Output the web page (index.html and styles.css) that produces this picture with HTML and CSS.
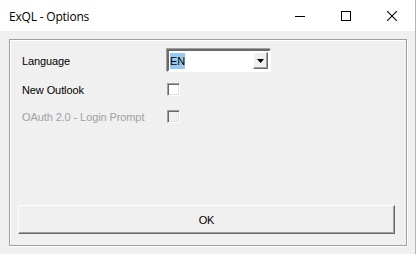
FILE: index.html
```html
<!DOCTYPE html>
<html>
<head>
<meta charset="utf-8">
<link rel="stylesheet" href="styles.css">
</head>
<body>
<div class="window">
  <div class="titlebar">
    <span class="title">ExQL - Options</span>
    <div class="controls">
      <span class="ctl"><svg width="10" height="10" viewBox="0 0 10 10"><path d="M0 5.5H10" stroke="#000" stroke-width="1"/></svg></span>
      <span class="ctl"><svg width="10" height="10" viewBox="0 0 10 10"><rect x="0.5" y="0.5" width="9" height="9" fill="none" stroke="#000" stroke-width="1"/></svg></span>
      <span class="ctl"><svg width="10" height="10" viewBox="0 0 10 10"><path d="M0 0L10 10M10 0L0 10" stroke="#000" stroke-width="1.05"/></svg></span>
    </div>
  </div>
  <div class="content">
    <div class="frame">
      <div class="row row-lang">
        <span class="label">Language</span>
        <div class="combo">
          <span class="combo-text"><span class="sel">EN</span></span>
          <span class="combo-btn"><svg width="7" height="4" viewBox="0 0 7 4"><path d="M0 0H7L3.5 4Z" fill="#000"/></svg></span>
        </div>
      </div>
      <div class="row row-check first">
        <span class="label">New Outlook</span>
        <span class="check"></span>
      </div>
      <div class="row row-check second">
        <span class="label disabled">OAuth 2.0 - Login Prompt</span>
        <span class="check off"></span>
      </div>
      <div class="spacer"></div>
      <div class="btn">OK</div>
    </div>
  </div>
</div>
</body>
</html>
```
FILE: styles.css
```css
html, body {
  margin: 0;
  padding: 0;
  width: 416px;
  height: 254px;
  overflow: hidden;
  background: #f0f0f0;
}
.window {
  width: 416px;
  height: 254px;
  display: flex;
  flex-direction: column;
  box-sizing: border-box;
  border-right: 1px solid #b4b4b4;
}
.titlebar {
  height: 31px;
  background: #fff;
  display: flex;
  align-items: center;
  flex: none;
}
.title {
  font-family: "Open Sans", "Noto Sans", sans-serif;
  font-size: 12px;
  color: #000;
  margin-left: 9px;
  margin-top: 1px;
  letter-spacing: -0.2px;
}
.controls {
  margin-left: auto;
  display: flex;
  height: 31px;
  align-items: center;
}
.ctl {
  width: 46px;
  height: 31px;
  display: flex;
  align-items: center;
  justify-content: center;
}
.ctl svg { display: block; }
.content {
  flex: 1;
  padding: 8px 0 8px 9px;
  display: flex;
}
.frame {
  width: 398px;
  box-sizing: border-box;
  border: 1px solid #a0a0a0;
  box-shadow: inset 1px 1px #fff, 1px 1px #fff;
  display: flex;
  flex-direction: column;
  padding: 9px 10px 11px 12px;
  font-family: "Liberation Sans", Arial, sans-serif;
  font-size: 11px;
  letter-spacing: -0.1px;
}
.row {
  display: flex;
  align-items: center;
}
.label {
  width: 145px;
  color: #000;
  flex: none;
}
.label.disabled { color: #a0a0a0; }
.row-lang { height: 23px; }
.row-check { height: 13px; }
.row-check.first { margin-top: 11px; }
.row-check.second { margin-top: 14px; }
.combo {
  width: 104px;
  height: 23px;
  box-sizing: border-box;
  background: #fff;
  border-style: solid;
  border-width: 2px;
  border-color: #696969 #fff #fff #696969;
  box-shadow: -1px -1px 0 0 #a0a0a0;
  display: flex;
  align-items: center;
}
.combo-text {
  flex: 1;
  padding-left: 1px;
  display: flex;
  align-items: center;
}
.sel {
  display: inline-block;
  background: #99c9ef;
  color: #000;
  height: 16px;
  line-height: 16px;
  letter-spacing: 0;
}
.combo-btn {
  width: 15px;
  height: 17px;
  margin-right: 1px;
  box-sizing: border-box;
  background: #f0f0f0;
  border-style: solid;
  border-width: 1px;
  border-color: #fff #696969 #696969 #fff;
  box-shadow: inset -1px -1px #a0a0a0;
  display: flex;
  align-items: center;
  justify-content: center;
}
.combo-btn svg { display: block; margin-top: 1px; }
.check {
  width: 13px;
  height: 13px;
  box-sizing: border-box;
  background: #fff;
  border-style: solid;
  border-width: 1px;
  border-color: #a0a0a0 #fff #fff #a0a0a0;
  box-shadow: inset 1px 1px #696969, inset -1px -1px #e3e3e3;
}
.check.off { background: #f0f0f0; }
.spacer { flex: 1; }
.btn {
  height: 29px;
  width: 377px;
  margin-left: -4px;
  box-sizing: border-box;
  border-style: solid;
  border-width: 1px;
  border-color: #fff #696969 #696969 #fff;
  box-shadow: inset -1px -1px #a0a0a0;
  background: #f0f0f0;
  display: flex;
  align-items: center;
  justify-content: center;
  color: #000;
}
```
